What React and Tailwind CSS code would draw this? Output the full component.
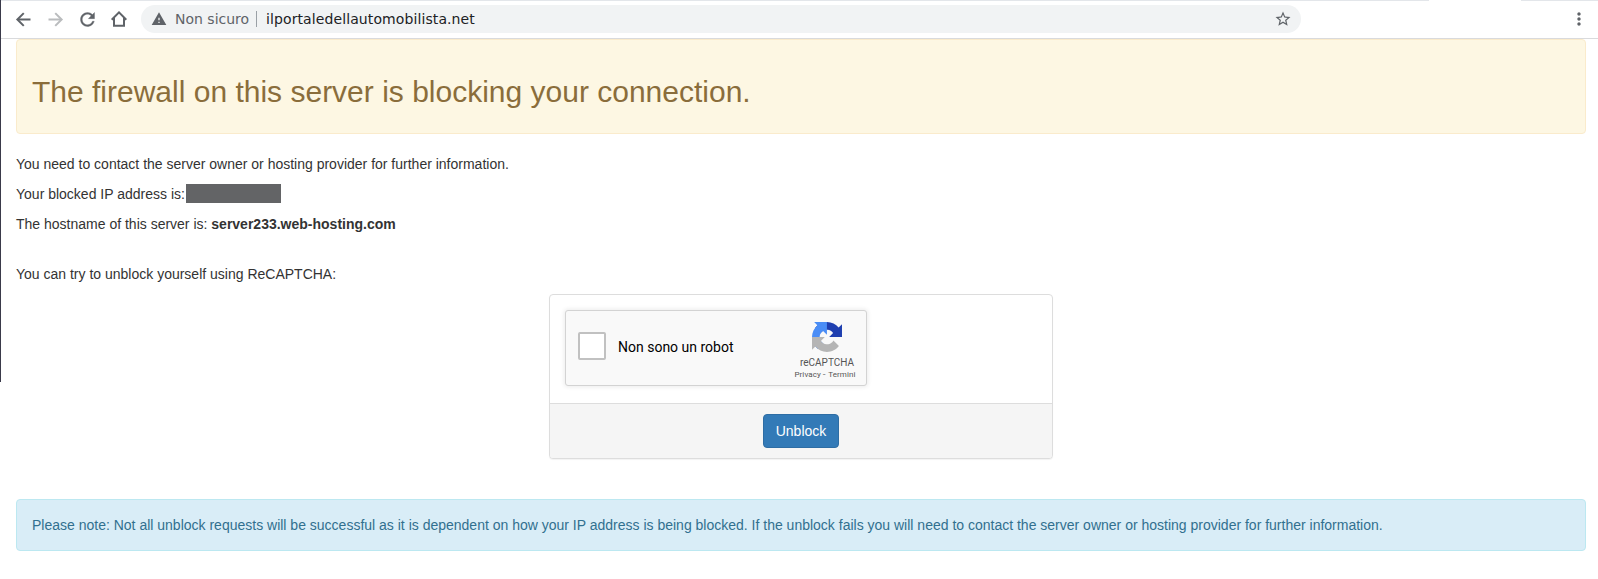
import React from 'react';
import { MdMoreVert, MdStarBorder, MdWarning } from 'react-icons/md';

const ArrowIcon = ({ className = '' }) => (
  <svg viewBox="0 0 24 24" className={`w-[21px] h-[21px] ${className}`} fill="none" stroke="currentColor" strokeWidth="2.3">
    <path d="M20 12 H5.5" />
    <path d="M12.3 4.7 L5 12 L12.3 19.3" />
  </svg>
);

const ReloadIcon = () => (
  <svg viewBox="0 0 24 24" className="w-[21px] h-[21px] ml-[11px]" fill="currentColor" stroke="currentColor" strokeWidth="0.4">
    <path d="M17.65 6.35C16.2 4.9 14.21 4 12 4c-4.42 0-7.99 3.58-7.99 8s3.57 8 7.99 8c3.73 0 6.84-2.55 7.73-6h-2.08c-.82 2.33-3.04 4-5.65 4-3.31 0-6-2.69-6-6s2.69-6 6-6c1.66 0 3.14.69 4.22 1.78L13 11h7V4l-2.35 2.35z" />
  </svg>
);

const HomeIcon = () => (
  <svg viewBox="0 0 16 16" className="w-4 h-4" fill="none" stroke="#5f6368" strokeWidth="2">
    <path d="M0.7 8.7 L8 1.4 L15.3 8.7" />
    <path d="M3 7 V14.8 H13 V7" />
  </svg>
);

const RecaptchaLogo = () => (
  <svg viewBox="0 0 64 64" className="w-[30px] h-[30px]">
    <path
      fill="#1f3fb0"
      d="M64 31.955l-.033-1.37V4.687l-7.16 7.16C50.948 4.674 42.033.093 32.05.093c-10.4 0-19.622 4.96-25.458 12.64l11.736 11.86a15.55 15.55 0 0 1 4.754-5.334c2.05-1.6 4.952-2.906 8.968-2.906.485 0 .86.057 1.135.163 4.976.393 9.288 3.14 11.828 7.124l-8.307 8.307L64 31.953"
    />
    <path
      fill="#4a8df6"
      d="M31.862.094l-1.37.033H4.594l7.16 7.16C4.58 13.147 0 22.06 0 32.046c0 10.4 4.96 19.622 12.64 25.458L24.5 45.768a15.55 15.55 0 0 1-5.334-4.754c-1.6-2.05-2.906-4.952-2.906-8.968 0-.485.057-.86.163-1.135.393-4.976 3.14-9.288 7.124-11.828l8.307 8.307L31.86.095"
    />
    <path
      fill="#b5b5b5"
      d="M.001 32.045l.033 1.37v25.898l7.16-7.16c5.86 7.173 14.774 11.754 24.76 11.754 10.4 0 19.622-4.96 25.458-12.64l-11.736-11.86a15.55 15.55 0 0 1-4.754 5.334c-2.05 1.6-4.952 2.906-8.968 2.906-.485 0-.86-.057-1.135-.163-4.976-.393-9.288-3.14-11.828-7.124l8.307-8.307c-10.522.04-22.4.066-27.295-.005"
    />
  </svg>
);

function BrowserBar() {
  return (
    <header className="h-[39px] bg-white border-b border-[#d9dadc] flex flex-col">
      {/* Bottom edge of the tab strip, open under the active tab */}
      <div className="flex h-px">
        <div className="w-[1429px] bg-[#e3e6ea]" />
        <div className="w-[92px]" />
        <div className="flex-1 bg-[#e3e6ea]" />
      </div>
      <div className="flex items-center h-9 pl-[12.5px] pr-[9px] text-[#5f6368]">
        <ArrowIcon />
        <ArrowIcon className="ml-[11px] rotate-180 text-[#babcbe]" />
        <ReloadIcon />
        <div className="ml-[13.5px]">
          <HomeIcon />
        </div>
        <div className="ml-[14px] w-[1160px] h-7 rounded-full bg-[#f1f3f4] flex items-center pl-[10px] pr-[9px] font-['DejaVu_Sans',sans-serif] text-[14px]">
          <MdWarning className="w-4 h-4" />
          <span className="ml-2 w-[74px] whitespace-nowrap">Non sicuro</span>
          <span className="ml-[7px] w-px h-4 bg-[#9aa0a6]" />
          <span className="ml-[9px] tracking-[0.1px] text-[#202124]">ilportaledellautomobilista.net</span>
          <MdStarBorder className="w-[18px] h-[18px] ml-auto" />
        </div>
        <MdMoreVert className="w-5 h-5 ml-auto" />
      </div>
    </header>
  );
}

function Captcha() {
  return (
    <div className="w-[302px] h-[76px] mb-0.5 rounded-[3px] border border-[#d3d3d3] bg-[#f9f9f9] shadow-[0_0_4px_1px_rgba(0,0,0,0.08)] flex font-[Roboto,sans-serif]">
      <div className="mt-[21px] ml-3 w-7 h-7 rounded-[2px] border-2 border-[#c1c1c1] bg-white" />
      <div className="mt-7 ml-3 text-[14px] leading-[17px] text-black">Non sono un robot</div>
      <div className="ml-auto mr-[9px] mt-[11px] w-[64px] flex flex-col items-center text-[#555]">
        <div className="pl-1">
          <RecaptchaLogo />
        </div>
        <div className="mt-[5px] pl-1 text-[10px] leading-[12px]">reCAPTCHA</div>
        <div className="mt-px flex text-[8px] leading-[10px] tracking-[0.1px] whitespace-nowrap">
          <span>Privacy</span>
          <span className="mx-[2.5px] scale-x-125">-</span>
          <span>Termini</span>
        </div>
      </div>
    </div>
  );
}

export default function App() {
  return (
    <div className="relative w-[1598px] h-[579px] overflow-hidden bg-white font-['Liberation_Sans',Arial,sans-serif] text-[14px] leading-5 text-[#333]">
      <BrowserBar />
      <main className="pl-4 pr-3">
        <div className="h-[95px] mb-5 p-[15px] rounded border border-[#faebcc] bg-[#fdf7e3] text-[#8a6d3b]">
          <h2 className="mt-5 mb-[10px] text-[30px] leading-[33px] font-medium">
            The firewall on this server is blocking your connection.
          </h2>
        </div>

        <p className="mb-[10px]">You need to contact the server owner or hosting provider for further information.</p>
        <p className="mb-[10px] flex items-start">
          Your blocked IP address is:
          <span className="ml-px w-[95px] h-[19px] bg-[#636466]" />
        </p>
        <p className="mb-[30px]">
          The hostname of this server is: <b>server233.web-hosting.com</b>
        </p>
        <p className="mb-[10px]">You can try to unblock yourself using ReCAPTCHA:</p>

        <div className="w-[504px] mx-auto mb-10 rounded border border-[#ddd] bg-white shadow-[0_1px_1px_rgba(0,0,0,0.05)]">
          <div className="h-[108px] p-[15px]">
            <Captcha />
          </div>
          <div className="px-[15px] py-[10px] border-t border-[#ddd] bg-[#f5f5f5] rounded-b-[3px] flex justify-center">
            <button className="w-[76px] h-[34px] rounded border border-[#2e6da4] bg-[#337ab7] text-white">Unblock</button>
          </div>
        </div>

        <div className="h-[52px] p-[15px] rounded border border-[#bce8f1] bg-[#d9edf7] text-[#31708f]">
          Please note: Not all unblock requests will be successful as it is dependent on how your IP address is being
          blocked. If the unblock fails you will need to contact the server owner or hosting provider for further
          information.
        </div>
      </main>
      {/* Window edge */}
      <div className="absolute left-0 top-0 w-px h-[382px] bg-[#3a3a4a]" />
    </div>
  );
}
